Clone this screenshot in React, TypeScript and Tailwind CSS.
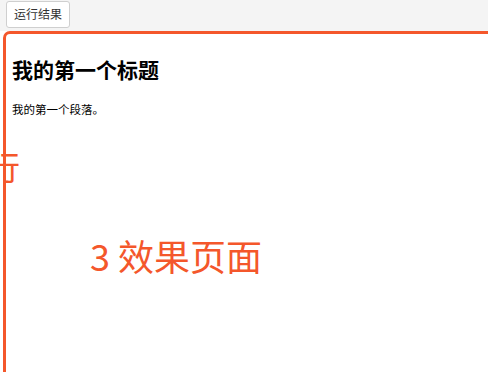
export default function App() {
  return (
    <div className="relative w-[488px] h-[372px] overflow-hidden bg-white font-['Noto_Sans_CJK_SC','Noto_Sans',sans-serif]">
      {/* toolbar */}
      <div className="h-[31px] bg-[#f4f4f4] pl-[6px]">
        <button className="-mt-px h-[27px] px-[7px] rounded-[3px] border border-[#cfcfcf] bg-white text-[12px] leading-none text-[#333]">
          运行结果
        </button>
      </div>

      {/* result frame */}
      <div className="ml-[3px] -mr-[20px] h-[400px] border-[3px] border-[#f4572b] rounded-tl-[7px] bg-white pl-[6px] pt-[23px]">
        <h1 className="text-[21px] leading-[24px] font-bold text-black">我的第一个标题</h1>
        <p className="mt-[21px] text-[11.5px] leading-[14px] text-black">我的第一个段落。</p>
      </div>

      {/* annotations */}
      <span className="absolute left-[-13px] top-[144px] text-[33px] leading-[44px] text-[#f4572b]">行</span>
      <span className="absolute left-[90px] top-[232px] text-[36px] leading-[46px] text-[#f4572b]">3 效果页面</span>
    </div>
  )
}
